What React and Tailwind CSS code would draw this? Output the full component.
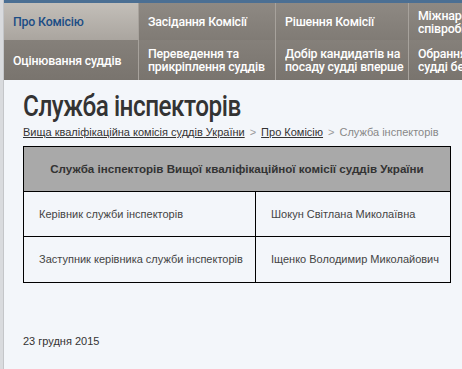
export default function App() {
  const top = [
    { label: ["Про Комісію"], active: true, w: "w-[135px]" },
    { label: ["Засідання Комісії"], w: "w-[137px]" },
    { label: ["Рішення Комісії"], w: "w-[133px]" },
    { label: ["Міжнародне", "співробітництво"], w: "w-[60px]" },
  ];
  const bottom = [
    { label: ["Оцінювання суддів"], w: "w-[135px]" },
    { label: ["Переведення та", "прикріплення суддів"], w: "w-[137px]" },
    { label: ["Добір кандидатів на", "посаду судді вперше"], w: "w-[133px]" },
    { label: ["Обрання на посаду", "судді безстроково"], w: "w-[60px]" },
  ];

  const MenuText = ({ lines }) => (
    <span className="whitespace-nowrap scale-x-[0.95] origin-left inline-block">
      {lines.map((l, i) => (
        <span key={i} className="block">
          {l}
        </span>
      ))}
    </span>
  );

  return (
    <div className="w-[462px] h-[369px] overflow-hidden bg-[#f3f6fa] flex font-['Liberation_Sans',sans-serif]">
      {/* left edge */}
      <div className="w-[4px] shrink-0 bg-[#d9dbde] border-r border-[#c4c6c9]" />
      <div className="flex-1 flex flex-col min-w-0">
        {/* menu */}
        <div className="bg-[#4b6f93] pt-[3px] font-['Roboto',sans-serif] font-medium text-[13px] leading-[13px] tracking-[-0.2px]">
          <div className="flex h-[37px]">
            {top.map((m) => (
              <div
                key={m.label[0]}
                className={`${m.w} shrink-0 flex items-center px-[9px] border-r border-[#a7a29c] overflow-hidden ${
                  m.active
                    ? "bg-gradient-to-b from-[#c3bfb9] to-[#aaa59f] text-[#1c4d85]"
                    : "bg-gradient-to-b from-[#8e8983] to-[#807b75] text-white"
                }`}
              >
                <MenuText lines={m.label} />
              </div>
            ))}
          </div>
          <div className="flex h-[40px] text-white">
            {bottom.map((m) => (
              <div
                key={m.label[0]}
                className={`${m.w} shrink-0 flex items-center px-[9px] border-r border-[#a7a29c] overflow-hidden bg-gradient-to-b from-[#85807a] to-[#79746e]`}
              >
                <MenuText lines={m.label} />
              </div>
            ))}
          </div>
        </div>

        {/* content */}
        <div className="pl-[19px] pr-[7px] pt-[9px]">
          <h1 className="font-['Roboto',sans-serif] font-medium text-[30px] leading-[34px] text-[#333] tracking-[-0.6px] scale-x-[0.81] origin-left whitespace-nowrap">
            Служба інспекторів
          </h1>
          <div className="mt-[2px] text-[11px] leading-[14px] text-[#333] flex items-center gap-[5px] whitespace-nowrap">
            <span className="underline">Вища кваліфікаційна комісія суддів України</span>
            <span className="text-[#999]">&gt;</span>
            <span className="underline">Про Комісію</span>
            <span className="text-[#999]">&gt;</span>
            <span className="text-[#888]">Служба інспекторів</span>
          </div>

          <table className="mt-[7px] w-[428px] border-collapse text-[11px] text-[#444] whitespace-nowrap">
            <tbody>
              <tr>
                <td
                  colSpan={2}
                  className="h-[45px] bg-[#a9a9a9] border border-black text-center font-bold text-[11.6px] text-[#333]"
                >
                  Служба інспекторів Вищої кваліфікаційної комісії суддів України
                </td>
              </tr>
              <tr>
                <td className="h-[45px] w-[232px] border border-black pl-[15px]">Керівник служби інспекторів</td>
                <td className="border border-black pl-[15px]">Шокун Світлана Миколаївна</td>
              </tr>
              <tr>
                <td className="h-[46px] border border-black pl-[15px]">Заступник керівника служби інспекторів</td>
                <td className="border border-black pl-[15px]">Іщенко Володимир Миколайович</td>
              </tr>
            </tbody>
          </table>

          <p className="mt-[50px] text-[11px] text-[#333]">23 грудня 2015</p>
        </div>
      </div>
    </div>
  );
}
